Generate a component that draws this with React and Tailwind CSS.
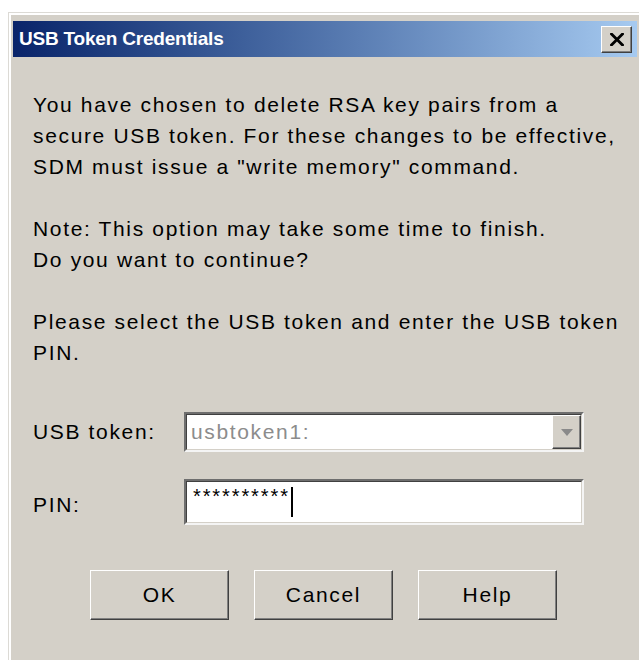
import React from "react";

const body = "font-['Liberation_Sans',Arial,sans-serif] text-[21px] tracking-[1.65px] text-black";

function CloseGlyph() {
  return (
    <svg width="14" height="13" viewBox="0 0 14 13" aria-hidden="true">
      <path d="M1.5 1 L12.5 12 M12.5 1 L1.5 12" stroke="#000" strokeWidth="2.8" strokeLinecap="square" />
    </svg>
  );
}

function Raised({ className = "", children }) {
  return (
    <div
      className={
        "flex items-center justify-center bg-[#d4d0c8] border border-t-white border-l-white border-r-[#404040] border-b-[#404040] shadow-[inset_-1px_-1px_0_#808080] " +
        className
      }
    >
      {children}
    </div>
  );
}

function Sunken({ className = "", children }) {
  return (
    <div
      className={
        "border-2 border-t-[#6e6e6e] border-l-[#6e6e6e] border-r-[#f4f4f4] border-b-[#f4f4f4] " + className
      }
    >
      <div className="h-full w-full border border-t-[#404040] border-l-[#404040] border-r-[#d4d0c8] border-b-[#d4d0c8] bg-white flex items-center">
        {children}
      </div>
    </div>
  );
}

export default function App() {
  return (
    <div className="min-h-screen bg-white pt-[12px] pl-[8px] overflow-hidden">
      <div className="h-[648px] w-[631px] bg-[#d4d0c8] pl-[5px] pt-[9px] pr-[2px] shadow-[inset_1px_1px_0_#dcdad5,inset_3px_3px_0_#ffffff] flex flex-col">
        {/* caption bar */}
        <div className="h-[36px] shrink-0 flex items-center justify-between pl-[6px] pr-[5px] bg-gradient-to-r from-[#0a246a] to-[#a6caf0]">
          <span className="font-['Liberation_Sans',Arial,sans-serif] font-bold text-[19px] text-white tracking-[-0.2px]">
            USB Token Credentials
          </span>
          <Raised className="w-[31px] h-[27px]">
            <CloseGlyph />
          </Raised>
        </div>

        {/* dialog body */}
        <div className={"flex flex-col pl-[20px] pt-[32px] " + body}>
          <div className="leading-[31px] whitespace-nowrap flex flex-col gap-[31px]">
            <p>
              You have chosen to delete RSA key pairs from a<br />
              secure USB token. For these changes to be effective,<br />
              SDM must issue a "write memory" command.
            </p>
            <p>
              Note: This option may take some time to finish.<br />
              Do you want to continue?
            </p>
            <p>
              Please select the USB token and enter the USB token<br />
              PIN.
            </p>
          </div>

          <div className="mt-[44px] flex items-center">
            <span className="w-[151px]">USB token:</span>
            <Sunken className="w-[400px] h-[40px]">
              <span className="flex-1 pl-[4px] text-[#8c8c8c]">usbtoken1:</span>
              <Raised className="w-[29px] h-full">
                <svg width="12" height="7" viewBox="0 0 12 7" aria-hidden="true">
                  <path d="M0 0 H12 L6 7 Z" fill="#8a8a8a" />
                </svg>
              </Raised>
            </Sunken>
          </div>

          <div className="mt-[27px] flex items-center">
            <span className="w-[151px] pt-[6px]">PIN:</span>
            <Sunken className="w-[400px] h-[46px]">
              <div className="h-full flex items-start pl-[6px] pt-[2px]">
                <span className="leading-[24px] tracking-[1.9px] text-[20px]">**********</span>
                <span className="ml-[1px] mt-[3px] w-[2px] h-[30px] bg-black" />
              </div>
            </Sunken>
          </div>

          <div className="mt-[45px] flex justify-center gap-[25px] pr-[23px]">
            <Raised className="w-[139px] h-[50px]">OK</Raised>
            <Raised className="w-[139px] h-[50px]">Cancel</Raised>
            <Raised className="w-[139px] h-[50px]">Help</Raised>
          </div>
        </div>
      </div>
    </div>
  );
}
